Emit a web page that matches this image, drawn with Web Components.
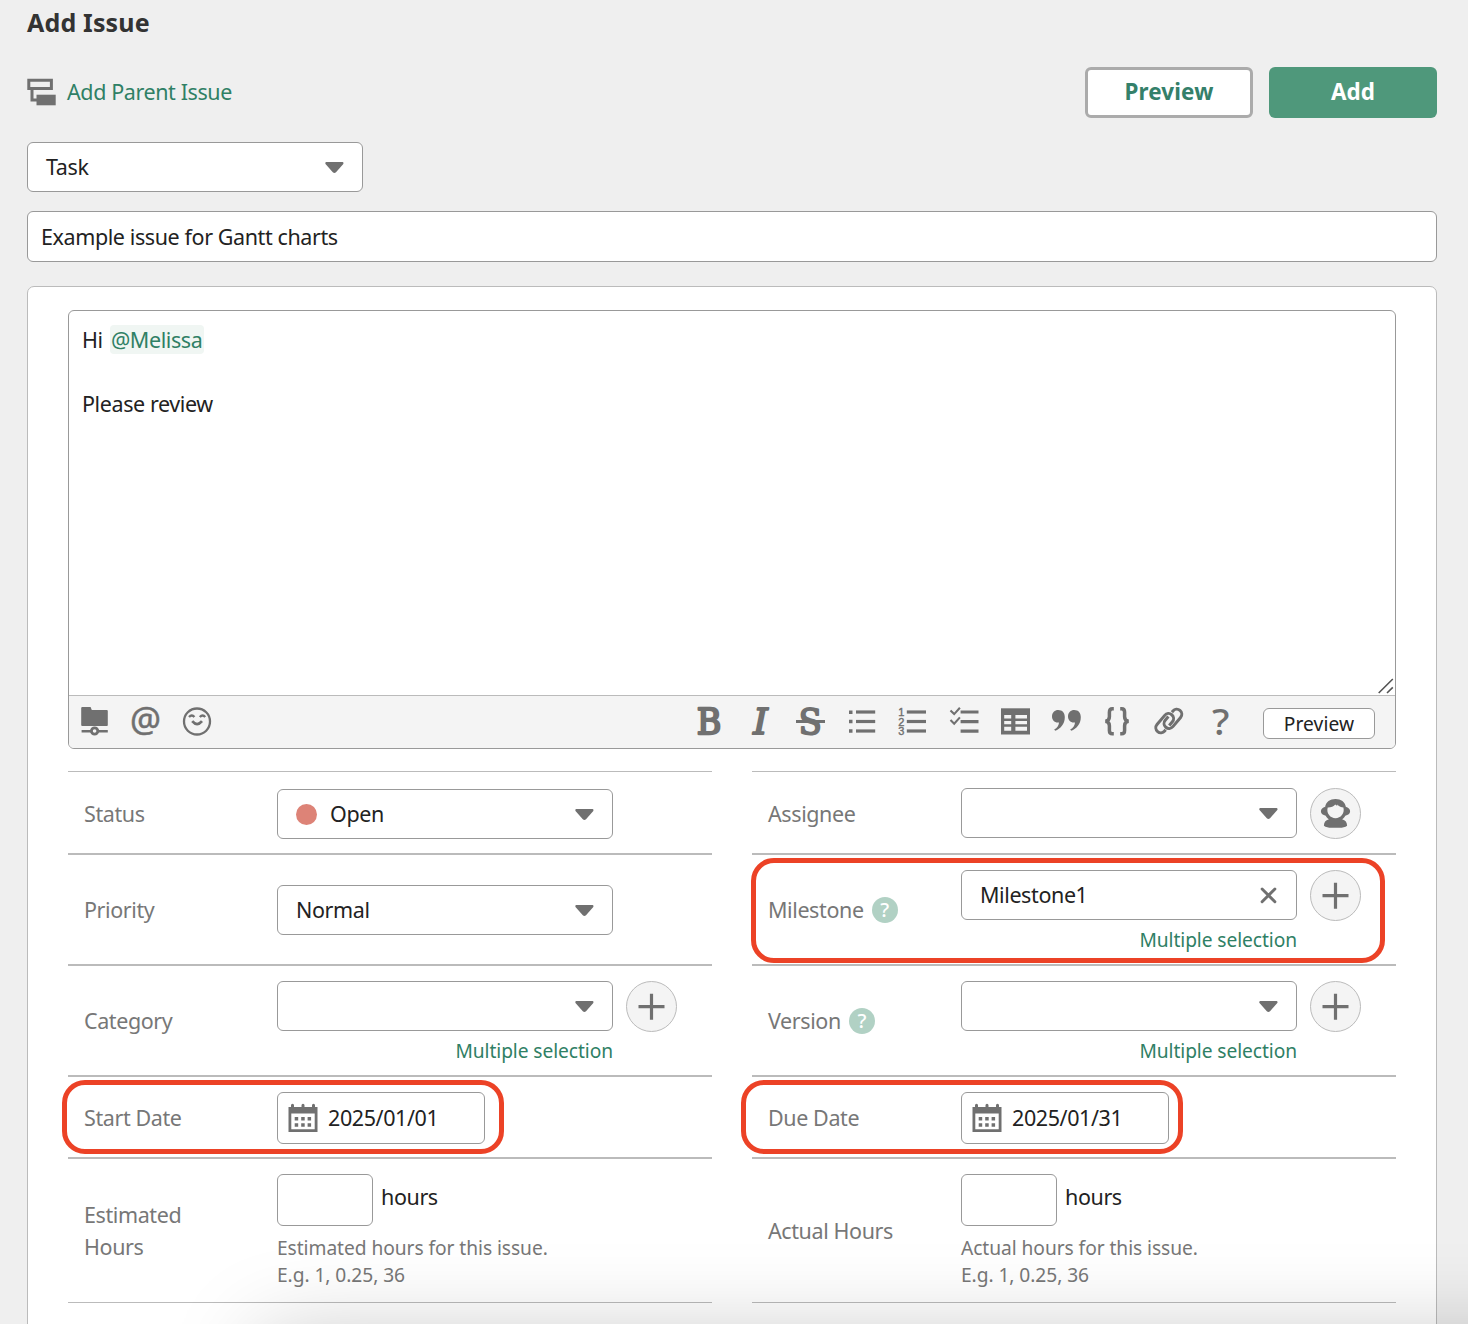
<!DOCTYPE html>
<html lang="en">
<head>
<meta charset="utf-8">
<title>Add Issue</title>
<style>
html,body{margin:0;height:1324px;overflow:hidden;background:#efefef}
body{font:21.5px/32px "Noto Sans","Open Sans",sans-serif;letter-spacing:-.4px;color:#222}
</style>
</head>
<body>
<add-issue-page></add-issue-page>
<script>
const define = (name, css, html) => customElements.define(name, class extends HTMLElement {
  constructor() {
    super();
    this.attachShadow({mode: 'open'}).innerHTML =
      `<style>*{box-sizing:border-box}:host{display:block;box-sizing:border-box}${css}</style>` +
      (typeof html === 'function' ? html(this) : html);
  }
});

const SLAB = 'font-family="DejaVu Serif" stroke="currentColor" stroke-linejoin="round"';
const lines = x => [-10, -0.5, 9].map(y => `<path d="M${x} ${y}h19.2" stroke="currentColor" stroke-width="3.2"/>`).join('');
/* Glyphs are drawn around an origin in the middle of their box. */
const ICONS = {
  parent: '<path d="M-13.2-11.700h22.600v8.300h-22.600zM-10-2.900V8H-4.500" fill="none" stroke="currentColor" stroke-width="3"/><path d="M-5.500 2.700h19.200v10.600H-5.500z"/>',
  folder: '<path d="M-12.6-15h8.2l1.2 3h15q1 0 1 1V3.2q0 .8-1 .8h-24.6q-1 0-1-1v-17q0-1 1.2-1z"/><path d="M-13.400 9.200h26.200" stroke="currentColor" stroke-width="2.6"/><circle cx="-.4" cy="9" r="3.2" fill="#f4f4f4" stroke="currentColor" stroke-width="2.8"/>',
  at: '<text x="-16" y="9.900" font-size="34.500" textLength="31" lengthAdjust="spacingAndGlyphs" stroke="currentColor" stroke-width=".5">@</text>',
  smile: '<g fill="none" stroke="currentColor" stroke-width="2.3"><circle cx="0" cy="-.5" r="13"/><path d="M-8-5q2.900-3 5.400 0M2.800-5q2.900-3 5.400 0" stroke-width="2.400"/><path d="M-4.800-.8q4.900 5.800 9.800 0" stroke-width="2.700"/></g>',
  bold: `<text x="-12.300" y="12.400" font-size="36.300" textLength="24.600" lengthAdjust="spacingAndGlyphs" ${SLAB} stroke-width="2.300">B</text>`,
  italic: `<text x="-6.800" y="12.400" font-size="36.300" textLength="14.500" lengthAdjust="spacingAndGlyphs" ${SLAB} stroke-width="2" font-style="italic">I</text>`,
  strike: `<text x="-12.200" y="12.300" font-size="35" textLength="23" lengthAdjust="spacingAndGlyphs" ${SLAB} stroke-width="2">S</text><path d="M-15-.5h29" stroke="currentColor" stroke-width="3"/>`,
  bullets: '<path d="M-13-11.6h3.5v3.5h-3.5zM-13-2.3h3.5v3.5h-3.5zM-13 7.2h3.5v3.5h-3.5z"/>' + lines(-6),
  numbers: '<g font-family="Liberation Sans" font-size="11" stroke="currentColor" stroke-width=".4"><text x="-14.800" y="-6.500">1</text><text x="-14.800" y="3.500">2</text><text x="-14.800" y="13.300">3</text></g>' + lines(-6.2),
  checks: '<g fill="none" stroke="currentColor"><path d="M-13.5-11.600l3.700 3.700 5.700-6.300M-13.500-2l3.700 3.700 5.700-6.300" stroke-width="2.100"/><path d="M-3.400-10h17.900M-3.400-.4h17.900M-3.400 9.200h17.900" stroke-width="3.2"/></g>',
  table: '<path d="M-15-13.700h29v26.200h-29z"/><path d="M-11.8-7h7v3.6h-7zM-.6-7h11.600v3.6H-.6zM-11.8-1h7v3.2h-7zM-.6-1h11.600v3.2H-.6zM-11.800 4.800h7v4h-7zM-.6 4.800h11.600v4H-.6z" fill="#f4f4f4"/>',
  quote: '<path d="M-8.800-12c4.200 0 6.600 2.800 6.600 7.200 0 6.600-4.400 11.600-9.600 13.600l-1-1.200c3-1.900 4.700-4.400 4.800-7.200-4.400.6-7-2.400-7-6 0-3.900 2.800-6.400 6.200-6.400zM7.200-12c4.200 0 6.600 2.800 6.600 7.200 0 6.600-4.400 11.600-9.600 13.600l-1-1.200c3-1.900 4.700-4.400 4.800-7.200-4.400.6-7-2.400-7-6 0-3.900 2.800-6.400 6.200-6.400z"/>',
  braces: '<path d="M-4.200-13.200h-1.400q-3 0-3 3.400v4.600q0 4-4 4.500 4 .5 4 4.500v4.600q0 3.400 3 3.400h1.400M2.200-13.200h1.400q3 0 3 3.400v4.600q0 4 4 4.500-4 .5-4 4.500v4.600q0 3.400-3 3.400H2.200" fill="none" stroke="currentColor" stroke-width="3.500"/>',
  link: '<g transform="translate(-.2 -1) rotate(-50)" fill="none" stroke="currentColor" stroke-width="3"><path d="M-3.200 3.250H1.700A5 5 0 0 0 1.700-6.750H-10.300A5 5 0 0 0-10.300 3.250H-8.800"/><path d="M3.200-3.250H-1.700A5 5 0 0 0-1.700 6.750H10.300A5 5 0 0 0 10.300-3.250H8.800"/></g>',
  question: '<text x="-8" y="12.700" font-size="36" textLength="17.400" lengthAdjust="spacingAndGlyphs" font-weight="500">?</text>',
  calendar: '<path d="M-14.500-11h2.500v-1.800q0-1.500 1.500-1.500t1.500 1.500v1.800h7.500v-1.800q0-1.500 1.500-1.500t1.500 1.500v1.800h7.500v-1.800q0-1.500 1.500-1.500t1.500 1.500v1.800h2.500V14h-29zM-11.700-4.500v15.700h23.400V-4.500z" fill-rule="evenodd"/><path d="M-8.300-1h3.500v3.500h-3.500zM-1.800-1h3.500v3.500h-3.500zM4.600-1h3.500v3.500H4.600zM-8.300 5.300h3.500v3.500h-3.500zM-1.800 5.300h3.500v3.500h-3.500zM4.600 5.300h3.500v3.500H4.600z"/>',
  person: '<g transform="translate(-.5 -.5)"><path d="M0-14.500C-5.500-14.500-9.600-11.500-10.300-6.800-12.800-6-14.600-4.700-14.600-2.200S-12.500 1.500-9.800 2.300C-8.800 4.200-7.600 5-6.600 5.800-10 6.600-11.600 9-11.600 12.300-9 14.700-4.500 14.200 0 14.200S9 14.700 11.600 12.300C11.600 9 10 6.600 6.600 5.800 7.600 5 8.800 4.200 9.800 2.300 12.500 1.500 14.600.3 14.600-2.200S12.800-6 10.300-6.800C9.600-11.500 5.500-14.500 0-14.500z"/><path d="M-7.800-6C-5-5.900-1.500-7-.3-9 .4-8.300 1-7.900 1.800-7.700L1.600-8.900C3.500-6.800 6-6 7.900-6 9.500 0 5 4.700 0 4.700S-9.500 0-7.800-6z" fill="#f4f4f4"/></g>',
  plus: '<path d="M-13.500-.3h26M-.5-13.300v26" stroke="currentColor" stroke-width="3.2"/>',
  cross: '<path d="M-5.900-6L6.900 6.800M6.900-6L-5.900 6.800" stroke="currentColor" stroke-width="2.900" stroke-linecap="round"/>',
  arrow: '<path transform="translate(.4 .7)" d="M-8.300-5.600H8.300q1.400.5.600 1.900L1.600 4.500q-1.600 1.500-3.200 0L-8.900-3.700q-.8-1.400.6-1.900z"/>',
  grip: '<path d="M-7.300 7L6.800-7M1 7L6.800 1.400" stroke="#555" stroke-width="1.600"/>'
};

define('ui-icon', ':host{display:inline-block;width:32px;height:32px;flex:none;color:#707070;letter-spacing:0}svg{display:block;overflow:visible}',
  el => `<svg width="32" height="32" viewBox="-16 -16 32 32" fill="currentColor">${ICONS[el.getAttribute('name')]}</svg>`);

define('ui-button', `
:host{width:168px;height:51px;border-radius:6px;display:flex;align-items:center;justify-content:center;font-weight:700;font-size:22.400px;letter-spacing:.15px;background:#4f987b;color:#fff;padding-bottom:1px}
:host([kind=outline]){background:#fff;border:3px solid #ababab;color:#34806a}
:host([kind=small]){width:112px;height:31px;border:1px solid #999;border-radius:6px;background:#fff;color:#222;font-weight:400;font-size:19.200px;padding:0;letter-spacing:.1px}`, '<slot></slot>');

define('ui-select', `
:host{width:336px;height:50px;background:#fff;border:1px solid #999;border-radius:6px;display:flex;align-items:center;padding:0 12px 0 18px}
span{flex:1;display:flex;align-items:center}
::slotted(i){width:21px;height:21px;border-radius:50%;background:#dd8377;margin-right:13px}`,
  el => `<span><slot></slot></span><ui-icon name="${el.getAttribute('icon') || 'arrow'}"></ui-icon>`);

define('ui-text-input', ':host{height:51px;background:#fff;border:1px solid #999;border-radius:6px;padding:9px 13px}', '<slot></slot>');

define('round-button', ':host{width:51px;height:51px;border-radius:50%;border:1px solid #bbb;background:#f4f4f4;display:flex;align-items:center;justify-content:center;flex:none}',
  el => `<ui-icon name="${el.getAttribute('icon')}"></ui-icon>`);

define('help-badge', ':host{display:inline-flex;width:26px;height:26px;border-radius:50%;background:#b1d1c4;color:#fff;align-items:center;justify-content:center;font-size:20px;font-weight:500;line-height:26px;margin-left:8px}', '?');

define('multi-link', ':host{width:336px;text-align:right;color:#2f8065;font-size:19.200px;letter-spacing:-.08px;line-height:26px;margin-top:7px}', 'Multiple selection');

define('date-input', ':host{width:208px;height:52px;background:#fff;border:1px solid #999;border-radius:6px;display:flex;align-items:center;padding-left:9px;gap:9px}',
  '<ui-icon name="calendar"></ui-icon><span><slot></slot></span>');

define('hours-input', `
.row{display:flex;gap:8px}.box{width:96px;height:52px;background:#fff;border:1px solid #999;border-radius:6px}
.unit{padding-top:7px}
.hint{font-size:19.200px;letter-spacing:-.06px;line-height:27px;color:#777;margin-top:8px}`,
  '<div class="row"><div class="box"></div><span class="unit">hours</span></div><div class="hint"><slot></slot></div>');

define('form-field', `
:host{display:flex;border-top:1px solid #bbb;border-bottom:1px solid #bbb;height:var(--h)}
.label{width:209px;padding-left:16px;color:#777;display:flex;align-items:center;padding-top:var(--nudge,1px)}
.label span{max-width:150px}
.control{padding-top:calc(var(--top,16px) - 1px)}`,
  el => `<div class="label"><span>${el.getAttribute('label')}</span>${el.hasAttribute('help') ? '<help-badge></help-badge>' : ''}</div><div class="control"><slot></slot></div>`);

define('control-row', ':host{display:flex;gap:13px;height:50px}', '<slot></slot>');

define('field-mark', ':host{position:absolute;border:5.300px solid #ec4226;border-radius:23px;pointer-events:none}', '');

define('comment-editor', `
:host{height:439px;border:1px solid #999;border-radius:6px;background:#fff;overflow:hidden;display:flex;flex-direction:column}
.text{flex:1;padding:13px;position:relative}
.text p{margin:0 0 32px}
mark{background:#f0f6f3;color:#2f8065;border-radius:4px;padding:0 2px 0 1px;margin-left:2px}
.grip{position:absolute;right:-7px;bottom:-7px}
.bar{height:53px;border-top:1px solid #bbb;background:#f4f4f4;display:flex;align-items:center;padding-right:20px}
.bar>div{display:flex}.bar ui-icon{margin:0 9.600px}
.format{margin-left:auto}
ui-button{margin:3px 0 0 17px}`,
  `<div class="text"><p>Hi <mark>@Melissa</mark></p><p>Please review</p><ui-icon class="grip" name="grip"></ui-icon></div>
   <div class="bar"><div>${['folder', 'at', 'smile'].map(n => `<ui-icon name="${n}"></ui-icon>`).join('')}</div>
   <div class="format">${['bold', 'italic', 'strike', 'bullets', 'numbers', 'checks', 'table', 'quote', 'braces', 'link', 'question'].map(n => `<ui-icon name="${n}"></ui-icon>`).join('')}</div>
   <ui-button kind="small">Preview</ui-button></div>`);

define('add-issue-page', `
:host{height:1324px;position:relative;overflow:hidden;padding:6px 31px 0 27px}
h1{font-size:25px;letter-spacing:.15px;line-height:32px;margin:0 0 29px;color:#333}
header{display:flex;align-items:center;gap:16px;height:51px}
.parent{display:flex;align-items:center;gap:10px;margin-right:auto;color:#2f8065;padding-bottom:2px}
.parent ui-icon{margin-left:-1px;width:31px}
.type{margin-top:24px}
.summary{margin-top:19px}
.panel{margin-top:24px;height:1100px;background:#fff;border:1px solid #bbb;border-radius:7px;padding:23px 40px}
.fields{display:flex;gap:40px;margin-top:22px}
.fields>div{width:644px}
.fade{position:absolute;left:260px;top:1335px;width:1700px;height:200px;box-shadow:0 0 90px rgba(0,0,0,.22);pointer-events:none}`, `
<h1>Add Issue</h1>
<header><div class="parent"><ui-icon name="parent"></ui-icon><span>Add Parent Issue</span></div>
<ui-button kind="outline">Preview</ui-button><ui-button>Add</ui-button></header>
<ui-select class="type">Task</ui-select>
<ui-text-input class="summary">Example issue for Gantt charts</ui-text-input>
<div class="panel">
  <comment-editor></comment-editor>
  <div class="fields">
    <div>
      <form-field label="Status" style="--h:83px;--top:18px;--nudge:3px"><ui-select><i></i>Open</ui-select></form-field>
      <form-field label="Priority" style="--h:111px;--top:31px"><ui-select>Normal</ui-select></form-field>
      <form-field label="Category" style="--h:111px"><control-row><ui-select></ui-select><round-button icon="plus"></round-button></control-row><multi-link></multi-link></form-field>
      <form-field label="Start Date" style="--h:82px"><date-input>2025/01/01</date-input></form-field>
      <form-field label="Estimated<br>Hours" style="--h:145px"><hours-input>Estimated hours for this issue.<br>E.g. 1, 0.25, 36</hours-input></form-field>
    </div>
    <div>
      <form-field label="Assignee" style="--h:83px;--top:17px;--nudge:3px"><control-row><ui-select></ui-select><round-button icon="person"></round-button></control-row></form-field>
      <form-field label="Milestone" help style="--h:111px"><control-row><ui-select icon="cross">Milestone1</ui-select><round-button icon="plus"></round-button></control-row><multi-link></multi-link></form-field>
      <form-field label="Version" help style="--h:111px"><control-row><ui-select></ui-select><round-button icon="plus"></round-button></control-row><multi-link></multi-link></form-field>
      <form-field label="Due Date" style="--h:82px"><date-input>2025/01/31</date-input></form-field>
      <form-field label="Actual Hours" style="--h:145px"><hours-input>Actual hours for this issue.<br>E.g. 1, 0.25, 36</hours-input></form-field>
    </div>
  </div>
</div>
<field-mark style="left:751px;top:858px;width:634px;height:105px"></field-mark>
<field-mark style="left:62px;top:1080px;width:442px;height:74px"></field-mark>
<field-mark style="left:741px;top:1080px;width:442px;height:74px"></field-mark>
<div class="fade"></div>`);
</script>
</body>
</html>
